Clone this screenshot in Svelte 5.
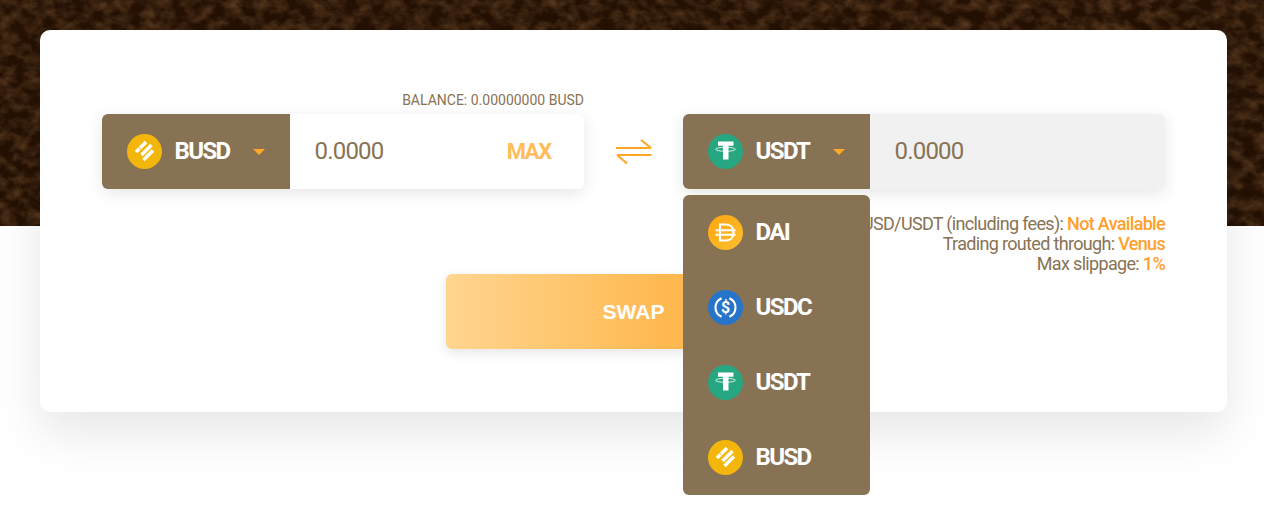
<script lang="ts">
	const tokens = ['DAI', 'USDC', 'USDT', 'BUSD'];
</script>

{#snippet coin(name: string)}
	<svg class="coin" viewBox="0 0 35 35" aria-hidden="true">
		{#if name === 'DAI'}
			<defs>
				<linearGradient id="dai" x1="0" y1="0" x2="1" y2="1">
					<stop offset="0" stop-color="#ffa50f" />
					<stop offset="1" stop-color="#fcc02f" />
				</linearGradient>
			</defs>
			<circle cx="17.5" cy="17.5" r="17.5" fill="url(#dai)" />
			<path
				d="M12 9.500h6c4.600 0 7.600 3.200 7.600 8s-3 8-7.600 8h-6zM7.500 15.200h20M7.500 19.800h20"
				fill="none"
				stroke="#fff"
				stroke-width="2.100"
			/>
		{:else if name === 'USDC'}
			<circle cx="17.5" cy="17.5" r="17.5" fill="#2775ca" />
			<path
				d="M13.600 8.300a10 10 0 0 0 0 18.400M21.400 8.300a10 10 0 0 1 0 18.400"
				fill="none"
				stroke="#fff"
				stroke-width="2.100"
			/>
			<text class="dollar" x="17.500" y="23.200" text-anchor="middle">$</text>
		{:else if name === 'USDT'}
			<circle cx="17.5" cy="17.5" r="17.5" fill="#26a681" />
			<path d="M10 7.500h15.500v4.300h-5v13.700h-5.500V11.800H10z" fill="#fff" />
			<ellipse cx="17.5" cy="15.300" rx="10" ry="2" fill="none" stroke="#fff" stroke-width="0.800" />
		{:else}
			<circle cx="17.5" cy="17.5" r="17.5" fill="#f3b70b" />
			<path
				d="M13 14l6-6M14.500 21l10-10M16.500 26l9.500-9.500M9 18l3.500-3.500"
				fill="none"
				stroke="#fff"
				stroke-width="3.500"
			/>
		{/if}
	</svg>
{/snippet}

<div class="page">
	<svg class="leather" width="1264" height="226" aria-hidden="true">
		<filter id="grain" x="0" y="0" width="100%" height="100%">
			<feTurbulence type="fractalNoise" baseFrequency="0.07 0.09" numOctaves="4" seed="7" />
			<feColorMatrix
				values="0 0 0 0 0.24  0 0 0 0 0.11  0 0 0 0 0.04  1 0 0 0 -0.360"
			/>
		</filter>
		<rect width="1264" height="226" fill="#241104" />
		<rect width="1264" height="226" filter="url(#grain)" />
	</svg>

	<main class="card">
		<div class="swap-row">
			<div class="side">
				<p class="balance">BALANCE: 0.00000000 BUSD</p>
				<div class="field">
					<button class="token" type="button">
						{@render coin('BUSD')}
						<span class="symbol">BUSD</span>
						<span class="caret"></span>
					</button>
					<input class="amount" placeholder="0.0000" />
					<button class="max" type="button">MAX</button>
				</div>
			</div>

			<svg class="arrows" viewBox="0 0 36 26" aria-hidden="true">
				<path d="M0 9h35M25 1l10 8M35.500 16H1M11 24.500L1 16" fill="none" stroke="#ffa726" stroke-width="2.200" />
			</svg>

			<div class="side">
				<div class="field to">
					<div class="picker">
						<button class="token" type="button">
							{@render coin('USDT')}
							<span class="symbol">USDT</span>
							<span class="caret"></span>
						</button>
						<ul class="menu">
							{#each tokens as name (name)}
								<li>
									{@render coin(name)}
									<span class="symbol">{name}</span>
								</li>
							{/each}
						</ul>
					</div>
					<input class="amount" placeholder="0.0000" disabled />
				</div>
			</div>
		</div>

		<div class="info">
			<div>Price BUSD/USDT (including fees): <b>Not Available</b></div>
			<div>Trading routed through: <b>Venus</b></div>
			<div>Max slippage: <b>1%</b></div>
		</div>

		<button class="swap" type="button">SWAP</button>
	</main>
</div>

<style>
	:global(body) {
		margin: 0;
		background: #fff;
		font-family: Roboto, sans-serif;
		overflow: hidden;
	}
	.page {
		position: relative;
		height: 514px;
		padding: 30px 37px 0 40px;
		box-sizing: border-box;
		overflow: hidden;
	}
	.leather {
		position: absolute;
		top: 0;
		left: 0;
	}
	.card {
		position: relative;
		height: 382px;
		box-sizing: border-box;
		padding: 84px 62px 0;
		background: #fff;
		border-radius: 10px;
		box-shadow: 0 20px 50px rgba(0, 0, 0, 0.1);
	}
	.swap-row {
		display: flex;
		justify-content: space-between;
		align-items: center;
	}
	.side {
		position: relative;
		width: 482px;
	}
	.balance {
		position: absolute;
		right: 0;
		bottom: 100%;
		margin: 0 0 6px;
		font-size: 14px;
		line-height: 16px;
		color: #887254;
	}
	.field {
		display: flex;
		height: 75px;
		background: #fff;
		border-radius: 6px;
		box-shadow: 0 4px 16px rgba(0, 0, 0, 0.1);
	}
	.field.to {
		background: #f1f1f1;
	}
	.token {
		display: flex;
		align-items: center;
		width: 188px;
		height: 75px;
		padding: 0 0 0 25px;
		border: 0;
		background: #887254;
		border-radius: 6px 0 0 6px;
		font: inherit;
		cursor: pointer;
	}
	.picker {
		position: relative;
	}
	.picker .token {
		width: 187px;
	}
	.coin {
		width: 35px;
		height: 35px;
		flex: none;
	}
	.dollar {
		font-family: Roboto, sans-serif;
		font-size: 16px;
		font-weight: 700;
		fill: #fff;
	}
	.symbol {
		margin: 0 0 2px 12.500px;
		font-size: 24px;
		font-weight: 700;
		letter-spacing: -1.600px;
		color: #fff;
	}
	.caret {
		margin: 0 25.500px 0 auto;
		border-style: solid;
		border-width: 6px 6.5px 0;
		border-color: #ffa726 transparent transparent;
	}
	.amount {
		flex: 1;
		min-width: 0;
		padding: 0 0 2px 24.500px;
		border: 0;
		outline: 0;
		background: transparent;
		font: inherit;
		font-size: 24px;
		letter-spacing: -0.8px;
		color: #887254;
	}
	.amount::placeholder {
		color: #887254;
		opacity: 1;
	}
	.max {
		padding: 0 33px 0 0;
		border: 0;
		background: none;
		font: inherit;
		font-size: 22px;
		font-weight: 700;
		letter-spacing: -1.3px;
		color: #ffbc5a;
		cursor: pointer;
	}
	.arrows {
		width: 36px;
		height: 26px;
	}
	.menu {
		position: absolute;
		z-index: 2;
		top: 81px;
		left: 0;
		width: 187px;
		margin: 0;
		padding: 0;
		list-style: none;
		background: #887254;
		border-radius: 6px;
	}
	.menu li {
		display: flex;
		align-items: center;
		height: 75px;
		padding-left: 25px;
	}
	.info {
		margin-top: 25px;
		text-align: right;
		font-size: 18px;
		line-height: 20px;
		letter-spacing: -0.67px;
		color: #887254;
	}
	.info b {
		font-weight: 500;
		color: #ffa02e;
	}
	.swap {
		display: block;
		width: 375px;
		height: 75px;
		margin: 0 auto;
		border: 0;
		border-radius: 6px;
		background: linear-gradient(90deg, #ffd590, #ffb84f 60%);
		box-shadow: 0 4px 12px rgba(0, 0, 0, 0.1);
		font-family: "Liberation Sans", Arial, sans-serif;
		font-size: 21px;
		font-weight: 700;
		color: #fff;
	}
</style>
